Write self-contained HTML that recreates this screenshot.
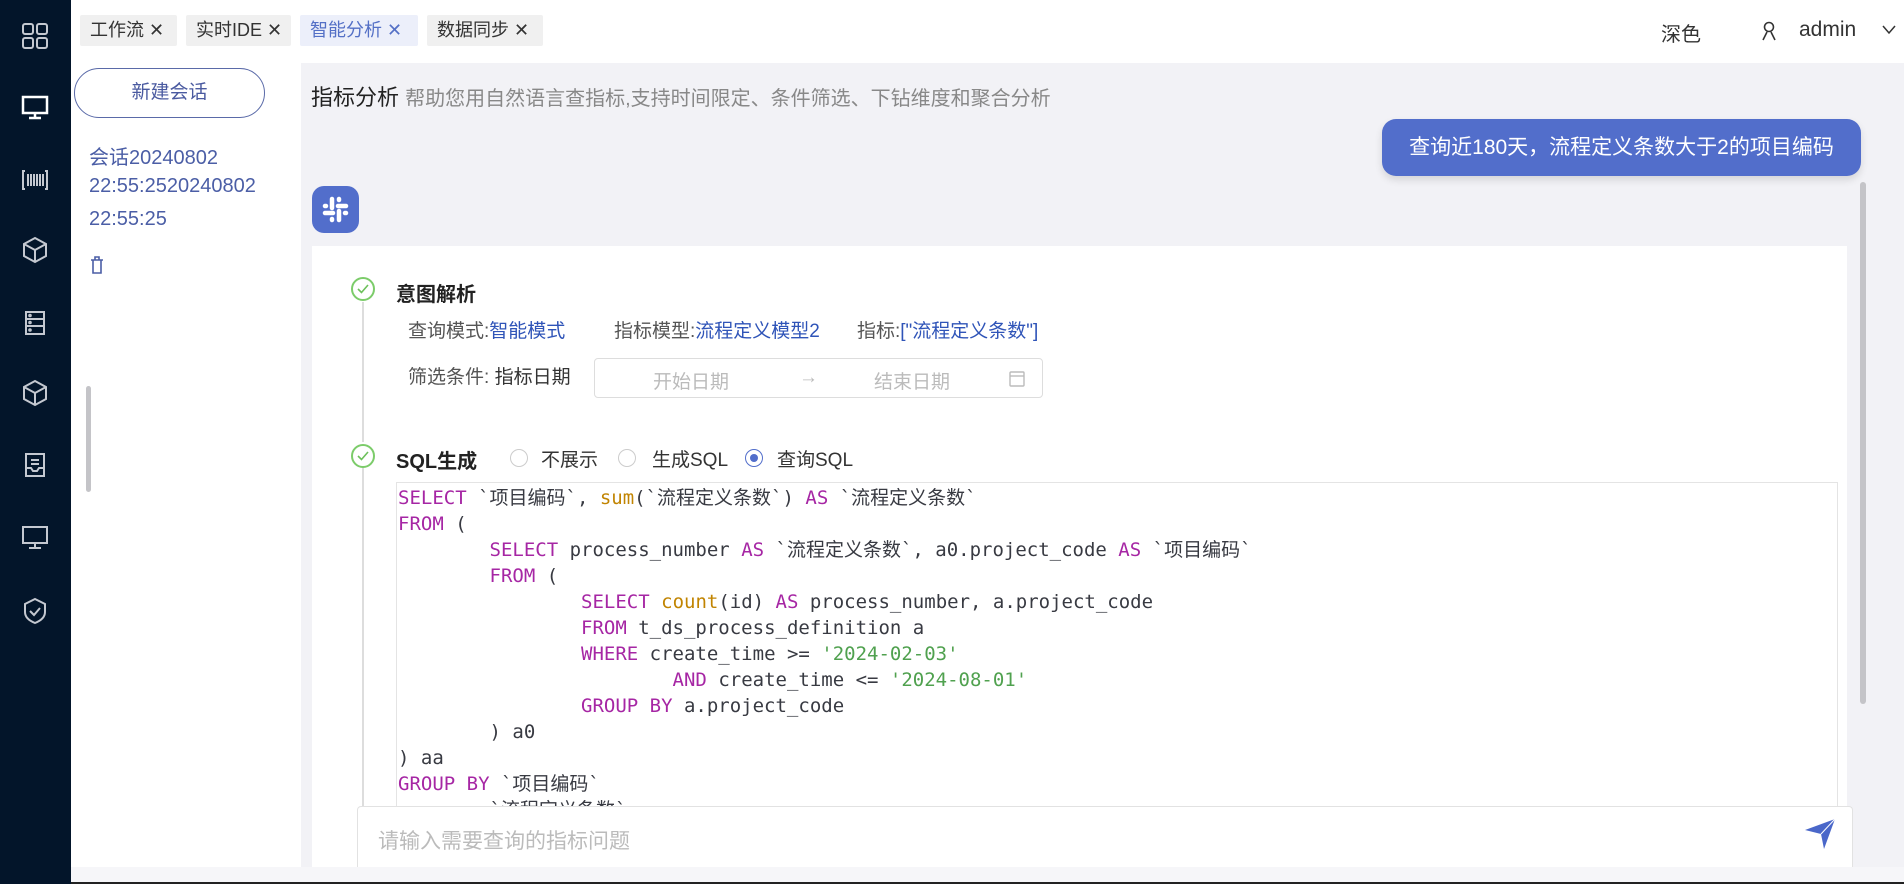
<!DOCTYPE html>
<html><head><meta charset="utf-8">
<style>
*{margin:0;padding:0;box-sizing:border-box}
body{width:1904px;height:884px;overflow:hidden;position:relative;background:#f2f2f6;font-family:"Liberation Sans","Noto Sans CJK SC",sans-serif;color:#333}
.abs{position:absolute}
#side{left:0;top:0;width:71px;height:884px;background:#03152a}
#side svg{position:absolute;left:21px;width:28px;height:28px;fill:none;stroke:#c4c8d0;stroke-width:2}
#top{left:71px;top:0;width:1833px;height:63px;background:#fff}
.tab{position:absolute;top:15px;height:31px;background:#f0f0f0;border-radius:2px;font-size:18px;line-height:31px;padding-left:10px;color:#333}
.tab.on{background:#eceffa;color:#5470c6}
#left{left:71px;top:63px;width:230px;height:821px;background:#fff}
#btn{left:74px;top:68px;width:191px;height:50px;border:1px solid #5a6aa8;border-radius:25px;text-align:center;line-height:48px;font-size:19px;color:#4a5aa0}
.ses{left:89px;font-size:20px;color:#4b5ea6}
#card{left:312px;top:246px;width:1535px;height:638px;background:#fff}
pre{font-family:"DejaVu Sans Mono","Liberation Mono","Noto Sans CJK SC",monospace;font-size:19px;line-height:26px;color:#383a42;tab-size:8}
.k{color:#a626a4}.f{color:#c18401}.s{color:#50a14f}
.chk{width:24px;height:24px;border:2px solid #7ccc6a;border-radius:50%}
.lbl{font-size:19px;color:#555}
.v{color:#2f54b8}
.radio{width:18px;height:18px;border:1px solid #ccc;border-radius:50%;background:#fff}
</style></head><body>
<div id="side" class="abs">
<svg style="top:22px" viewBox="0 0 28 28"><rect x="2" y="2" width="10" height="10" rx="2"/><rect x="16" y="2" width="10" height="10" rx="2"/><rect x="2" y="16" width="10" height="10" rx="2"/><rect x="16" y="16" width="10" height="10" rx="2"/></svg>
<svg style="top:93px;stroke:#fff;stroke-width:2.5" viewBox="0 0 28 28"><rect x="2" y="4" width="24" height="16"/><path d="M14 20v4M8 25h12"/></svg>
<svg style="top:166px" viewBox="0 0 28 28"><path d="M4 5H2v18h2M24 5h2v18h-2M7 8v12M10 8v12M13 8v12M16 8v12M19 8v12M22 8v12"/></svg>
<svg style="top:236px" viewBox="0 0 28 28"><path d="M14 2l11 6v12l-11 6-11-6V8zM3 8l11 6 11-6M14 14v12"/></svg>
<svg style="top:309px" viewBox="0 0 28 28"><rect x="5" y="3" width="18" height="22"/><path d="M5 10h18M5 17h18"/><circle cx="9" cy="6.5" r=".8"/><circle cx="9" cy="13.5" r=".8"/><circle cx="9" cy="21" r=".8"/></svg>
<svg style="top:379px" viewBox="0 0 28 28"><path d="M14 2l11 6v12l-11 6-11-6V8zM3 8l11 6 11-6M14 14v12"/></svg>
<svg style="top:451px" viewBox="0 0 28 28"><path d="M5 3h18v22H5zM10 9h8M10 13h8M5 17h5l2 3h4l2-3h5"/></svg>
<svg style="top:523px" viewBox="0 0 28 28"><rect x="2" y="4" width="24" height="16"/><path d="M14 20v4M8 25h12"/></svg>
<svg style="top:597px" viewBox="0 0 28 28"><path d="M14 2l10 5v8c0 6-5 9-10 11C9 24 4 21 4 15V7zM9 14l4 4 6-7"/></svg>
</div>
<div id="top" class="abs">
<div class="tab" style="left:9px;width:97px">工作流 ✕</div>
<div class="tab" style="left:115px;width:105px">实时IDE ✕</div>
<div class="tab on" style="left:229px;width:118px">智能分析 ✕</div>
<div class="tab" style="left:356px;width:116px">数据同步 ✕</div>
<div class="abs" style="left:1590px;top:18px;font-size:20px">深色</div>
<svg class="abs" style="left:1690px;top:21px" width="16" height="20" viewBox="0 0 16 20" fill="none" stroke="#333" stroke-width="1.6"><circle cx="8" cy="6" r="4.5"/><path d="M2 19l4-8M14 19l-4-8"/></svg>
<div class="abs" style="left:1728px;top:18px;font-size:21px">admin</div>
<svg class="abs" style="left:1811px;top:25px" width="14" height="10" viewBox="0 0 14 10" fill="none" stroke="#333" stroke-width="1.5"><path d="M1 1l6 7 6-7"/></svg>
</div>
<div id="left" class="abs"></div>
<div id="btn" class="abs">新建会话</div>
<div class="abs ses" style="top:141px">会话20240802</div>
<div class="abs ses" style="top:175px">22:55:2520240802</div>
<div class="abs ses" style="top:208px">22:55:25</div>
<svg class="abs" style="left:90px;top:256px" width="14" height="18" viewBox="0 0 14 18" fill="none" stroke="#4b5ea6" stroke-width="1.6"><path d="M1 4h12M5 4V1h4v3M3 4v13h8V4"/></svg>
<div class="abs" style="left:86px;top:386px;width:5px;height:106px;background:#c4c4c8;border-radius:3px"></div>

<div class="abs" style="left:311px;top:80px;font-size:22px;color:#222">指标分析 <span style="font-size:20px;color:#888">帮助您用自然语言查指标,支持时间限定、条件筛选、下钻维度和聚合分析</span></div>
<div class="abs" style="left:1382px;top:119px;width:479px;height:57px;background:#526ecb;border-radius:14px;color:#fff;font-size:21px;line-height:57px;text-align:center;box-shadow:0 4px 8px rgba(0,0,0,.12)">查询近180天，流程定义条数大于2的项目编码</div>
<div class="abs" style="left:1860px;top:182px;width:6px;height:522px;background:#c4c4c8;border-radius:3px"></div>
<div class="abs" style="left:312px;top:186px;width:47px;height:47px;background:#526ecb;border-radius:12px"></div>
<svg class="abs" style="left:320px;top:194px" width="31" height="31" viewBox="0 0 31 31" stroke="#fff" stroke-width="4.5" stroke-linecap="round"><path d="M12 5v9M19 17v9M5 19h8M18 12h8"/><path d="M19 5v1M12 25v1M5 12h1M25 19h1"/></svg>

<div id="card" class="abs"></div>
<div class="abs" style="left:362px;top:302px;width:2px;height:140px;background:#ddd"></div>
<div class="abs" style="left:362px;top:468px;width:2px;height:416px;background:#ddd"></div>
<div class="abs chk" style="left:351px;top:277px"></div>
<svg class="abs" style="left:357px;top:284px" width="12" height="10"><path d="M1 5l3.5 3.5L11 1" fill="none" stroke="#6cc05a" stroke-width="1.6"/></svg>
<div class="abs" style="left:396px;top:278px;font-size:20px;font-weight:bold;color:#222">意图解析</div>
<div class="abs lbl" style="left:408px;top:316px">查询模式:<span class="v">智能模式</span></div>
<div class="abs lbl" style="left:614px;top:316px">指标模型:<span class="v">流程定义模型2</span></div>
<div class="abs lbl" style="left:857px;top:316px">指标:<span class="v">["流程定义条数"]</span></div>
<div class="abs lbl" style="left:408px;top:362px">筛选条件: <span style="color:#333">指标日期</span></div>
<div class="abs" style="left:594px;top:358px;width:449px;height:40px;border:1px solid #ddd;border-radius:4px;font-size:19px;color:#bbb">
<span class="abs" style="left:58px;top:8px">开始日期</span><span class="abs" style="left:204px;top:8px">→</span><span class="abs" style="left:279px;top:8px">结束日期</span>
<svg class="abs" style="left:414px;top:11px" width="16" height="17" fill="none" stroke="#bbb" stroke-width="1.4"><rect x="1" y="2" width="14" height="14" rx="1"/><path d="M1 6h14"/></svg></div>
<div class="abs chk" style="left:351px;top:444px"></div>
<svg class="abs" style="left:357px;top:451px" width="12" height="10"><path d="M1 5l3.5 3.5L11 1" fill="none" stroke="#6cc05a" stroke-width="1.6"/></svg>
<div class="abs" style="left:396px;top:445px;font-size:20px;font-weight:bold;color:#222">SQL生成</div>
<div class="abs radio" style="left:510px;top:449px"></div>
<div class="abs lbl" style="left:541px;top:445px;color:#333">不展示</div>
<div class="abs radio" style="left:618px;top:449px"></div>
<div class="abs lbl" style="left:652px;top:445px;color:#333">生成SQL</div>
<div class="abs radio" style="left:745px;top:449px;border-color:#526ecb"><div style="width:8px;height:8px;margin:4px;border-radius:50%;background:#526ecb"></div></div>
<div class="abs lbl" style="left:777px;top:445px;color:#333">查询SQL</div>
<div class="abs" style="left:396px;top:482px;width:1442px;height:402px;border:1px solid #e4e4e4;overflow:hidden">
<pre style="padding:2px 0 0 1px"><span class="k">SELECT</span> `项目编码`, <span class="f">sum</span>(`流程定义条数`) <span class="k">AS</span> `流程定义条数`
<span class="k">FROM</span> (
	<span class="k">SELECT</span> process_number <span class="k">AS</span> `流程定义条数`, a0.project_code <span class="k">AS</span> `项目编码`
	<span class="k">FROM</span> (
		<span class="k">SELECT</span> <span class="f">count</span>(id) <span class="k">AS</span> process_number, a.project_code
		<span class="k">FROM</span> t_ds_process_definition a
		<span class="k">WHERE</span> create_time &gt;= <span class="s">'2024-02-03'</span>
			<span class="k">AND</span> create_time &lt;= <span class="s">'2024-08-01'</span>
		<span class="k">GROUP BY</span> a.project_code
	) a0
) aa
<span class="k">GROUP BY</span> `项目编码`
	`流程定义条数`</pre></div>
<div class="abs" style="left:357px;top:806px;width:1496px;height:61px;background:#fff;border:1px solid #e2e2e2;border-bottom:none;border-radius:4px 4px 0 0"></div>
<div class="abs" style="left:378px;top:825px;font-size:21px;color:#bbb">请输入需要查询的指标问题</div>
<svg class="abs" style="left:1803px;top:818px" width="34" height="34" viewBox="0 0 34 34"><path d="M2 12L32 1 21 31 18 16z" fill="#4a67c9"/><path d="M18 16L32 1" stroke="#fff" stroke-width="1"/></svg>
<div class="abs" style="left:71px;top:867px;width:1833px;height:17px;background:#f6f6f9"></div>
<div class="abs" style="left:71px;top:882px;width:1833px;height:2px;background:#222"></div>
</body></html>
